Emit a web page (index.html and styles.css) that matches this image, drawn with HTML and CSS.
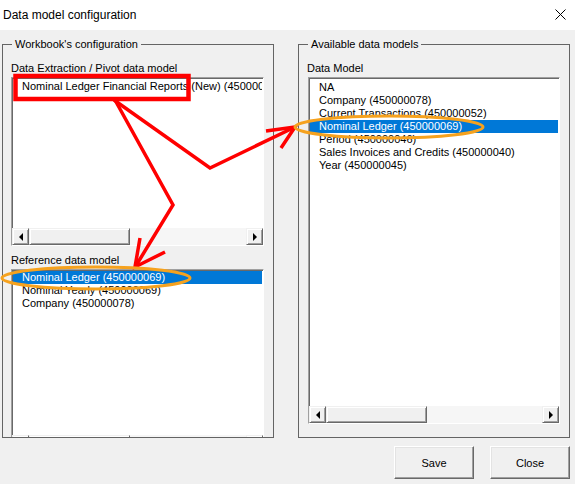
FILE: index.html
```html
<!DOCTYPE html>
<html>
<head>
<meta charset="utf-8">
<link rel="stylesheet" href="styles.css">
</head>
<body>
<div class="window">
  <div class="titlebar">
    <span class="title">Data model configuration</span>
    <svg class="close-icon" width="11" height="11" viewBox="0 0 11 11"><path d="M0.5 0.5 L10.5 10.5 M10.5 0.5 L0.5 10.5" stroke="#000" stroke-width="1" fill="none"/></svg>
  </div>
  <div class="content">
    <div class="groups">
      <div class="group">
        <div class="legend">Workbook's configuration</div>
        <div class="label first">Data Extraction / Pivot data model</div>
        <div class="listbox lb1">
          <div class="items pad2">
            <div class="item">Nominal Ledger Financial Reports (New) (450000069)</div>
          </div>
          <div class="hscroll">
            <div class="sb-btn"><span class="arrow-left"></span></div>
            <div class="sb-thumb"></div>
            <div class="sb-track"></div>
            <div class="sb-btn"><span class="arrow-right"></span></div>
          </div>
        </div>
        <div class="label second">Reference data model</div>
        <div class="clip">
          <div class="listbox lb2">
            <div class="items pad1">
              <div class="item selected">Nominal Ledger (450000069)</div>
              <div class="item">Nominal Yearly (450000069)</div>
              <div class="item">Company (450000078)</div>
            </div>
            <div class="hscroll">
              <div class="sb-btn"><span class="arrow-left"></span></div>
              <div class="sb-thumb"></div>
              <div class="sb-track"></div>
              <div class="sb-btn"><span class="arrow-right"></span></div>
            </div>
          </div>
        </div>
      </div>
      <div class="group">
        <div class="legend">Available data models</div>
        <div class="label first">Data Model</div>
        <div class="listbox lb3">
          <div class="items pad3">
            <div class="item">NA</div>
            <div class="item">Company (450000078)</div>
            <div class="item">Current Transactions (450000052)</div>
            <div class="item selected">Nominal Ledger (450000069)</div>
            <div class="item">Period (450000046)</div>
            <div class="item">Sales Invoices and Credits (450000040)</div>
            <div class="item">Year (450000045)</div>
          </div>
          <div class="hscroll">
            <div class="sb-btn"><span class="arrow-left"></span></div>
            <div class="sb-thumb"></div>
            <div class="sb-track"></div>
            <div class="sb-btn"><span class="arrow-right"></span></div>
          </div>
        </div>
      </div>
    </div>
    <div class="buttons">
      <button class="btn">Save</button>
      <button class="btn">Close</button>
    </div>
  </div>
  <svg class="annot" width="575" height="484" viewBox="0 0 575 484">
    <rect x="15.5" y="76" width="173" height="23" fill="none" stroke="#ff0000" stroke-width="4.5"/>
    <polyline points="114,100 210,168 293,128" fill="none" stroke="#ff0000" stroke-width="3.5" stroke-linejoin="miter"/>
    <polyline points="266,131 295,127 281,148" fill="none" stroke="#ff0000" stroke-width="3.5" stroke-linejoin="miter"/>
    <polyline points="115,100 173,205 137,264" fill="none" stroke="#ff0000" stroke-width="3.5" stroke-linejoin="miter"/>
    <polyline points="140,238 135,267 165,252" fill="none" stroke="#ff0000" stroke-width="3.5" stroke-linejoin="miter"/>
    <ellipse cx="389" cy="127" rx="94" ry="11" fill="none" stroke="#f6a21e" stroke-width="3"/>
    <ellipse cx="96" cy="278" rx="94" ry="11" fill="none" stroke="#f6a21e" stroke-width="3"/>
  </svg>
</div>
</body>
</html>
```
FILE: styles.css
```css
* { box-sizing: border-box; }
html, body { margin: 0; padding: 0; }
body {
  background: #f0f0f0;
  font-family: "Liberation Sans", Arial, sans-serif;
  font-size: 11px;
  color: #000;
}
.window {
  position: relative;
  width: 575px;
  height: 484px;
  overflow: hidden;
  background: #f0f0f0;
}
.titlebar {
  height: 30px;
  background: #fff;
  display: flex;
  align-items: center;
}
.title {
  font-size: 12px;
  line-height: 30px;
  padding-left: 3px;
}
.close-icon {
  margin-left: auto;
  margin-right: 9px;
  margin-top: -1px;
}
.content {
  padding: 14px 5px 0 2px;
}
.groups {
  display: flex;
  gap: 24px;
}
.group {
  width: 272px;
  height: 394px;
  border: 1px solid #646464;
  padding: 0 9px 0 8px;
  display: flex;
  flex-direction: column;
}
.legend {
  align-self: flex-start;
  margin: -8px 0 0 1px;
  padding: 0 3px;
  height: 14px;
  line-height: 14px;
  background: #f0f0f0;
  white-space: nowrap;
}
.label {
  height: 14px;
  line-height: 14px;
  white-space: nowrap;
  margin-bottom: 2px;
  flex-shrink: 0;
}
.label.first { margin-top: 10px; }
.label.second { margin-top: 7px; }
.listbox {
  background: #fff;
  border: 1px solid;
  border-color: #a0a0a0 #fff #fff #a0a0a0;
  box-shadow: inset 1px 1px 0 #696969;
  display: flex;
  flex-direction: column;
  overflow: hidden;
  flex-shrink: 0;
}
.lb1 { width: 253px; height: 169px; }
.lb2 { width: 253px; height: 184px; }
.lb3 { width: 252px; height: 347px; margin-left: 1px; }
.clip {
  flex: 1;
  min-height: 0;
  overflow: hidden;
}
.items {
  flex: 1;
  min-height: 0;
  overflow: hidden;
  padding: 0 1px;
}
.items.pad1 { padding-top: 1px; }
.items.pad2 { padding-top: 2px; }
.items.pad3 { padding-top: 3px; }
.item {
  height: 13px;
  line-height: 13px;
  padding-left: 9px;
  white-space: nowrap;
  overflow: hidden;
}
.item.selected {
  background: #0078d7;
  color: #fff;
}
.hscroll {
  height: 17px;
  flex-shrink: 0;
  display: flex;
  background: #f6f6f6;
}
.sb-btn, .sb-thumb {
  height: 17px;
  background: #f0f0f0;
  border: 1px solid;
  border-color: #f0f0f0 #696969 #696969 #f0f0f0;
  box-shadow: inset 1px 1px 0 #fff, inset -1px -1px 0 #a0a0a0;
}
.sb-btn {
  width: 17px;
  display: flex;
  align-items: center;
  justify-content: center;
  flex-shrink: 0;
}
.sb-thumb { width: 101px; flex-shrink: 0; }
.sb-track { flex: 1; }
.arrow-left {
  width: 0; height: 0;
  border-top: 4px solid transparent;
  border-bottom: 4px solid transparent;
  border-right: 4px solid #000;
}
.arrow-right {
  width: 0; height: 0;
  border-top: 4px solid transparent;
  border-bottom: 4px solid transparent;
  border-left: 4px solid #000;
}
.buttons {
  display: flex;
  justify-content: flex-end;
  gap: 16px;
  margin-top: 8px;
}
.btn {
  width: 80px;
  height: 33px;
  padding: 0;
  margin: 0;
  font-family: "Liberation Sans", Arial, sans-serif;
  font-size: 11px;
  color: #000;
  background: #f0f0f0;
  border: 1px solid;
  border-color: #fff #696969 #696969 #fff;
  box-shadow: inset -1px -1px 0 #a0a0a0, inset 1px 1px 0 #e3e3e3;
  border-radius: 0;
}
.annot {
  position: absolute;
  left: 0;
  top: 0;
  pointer-events: none;
}
```
